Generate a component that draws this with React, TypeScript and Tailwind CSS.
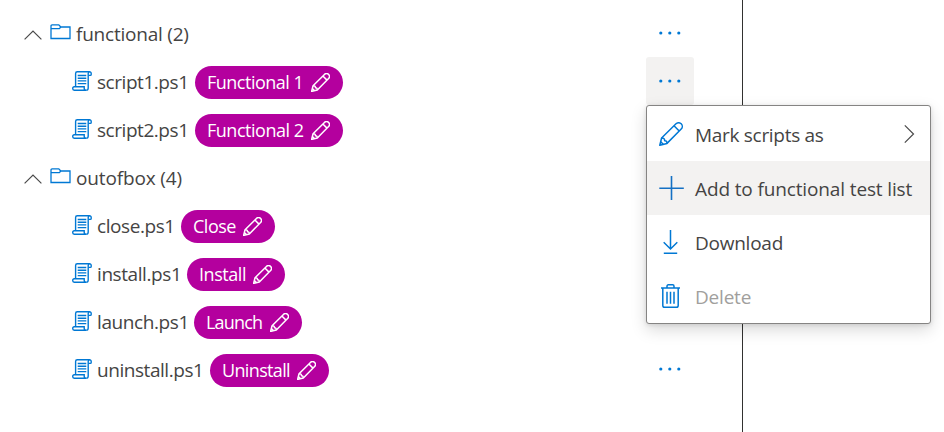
import React from "react";

type IconProps = { className?: string };

const ChevronUp = () => (
  <svg className="mt-0.5 h-5 w-[18px] shrink-0" viewBox="0 0 18 20" fill="none" stroke="#4a4a4a" strokeWidth="1.2">
    <path d="M0.6 14.4 9 6l8.4 8.4" />
  </svg>
);

const Folder = () => (
  <svg className="h-4 w-[21px] shrink-0" viewBox="0 0 21 16" fill="none" stroke="#0078d4" strokeWidth="1.3">
    <path d="M1 14.500V2.100c0-.8.4-1.200 1.100-1.200h6.700l2 2.100h9.200v11.500z" />
    <path d="M1 4.700h8.400l1.400-1.700" />
  </svg>
);

const Script = () => (
  <svg className="h-5 w-5 shrink-0" viewBox="0 0 20 20" fill="none" stroke="#0078d4" strokeWidth="1.4">
    <path d="M16.300 4.400h2c.6 0 .9-.3.9-.9v-1C19.200 1.400 18.500.8 17.400.8H5.300C4.200.8 3.600 1.500 3.600 2.500v13" />
    <path d="M17.600.8c-.9 0-1.400.6-1.400 1.700v14.400c0 1.400-.8 2.300-1.900 2.300" />
    <path d="M14.300 19.200H2.300c-1 0-1.600-.7-1.600-1.700s.6-1.800 1.600-1.800h9.900v1.600c0 1.100.7 1.900 2.100 1.900z" />
    <path d="M5.700 4.500h8.600M5.700 7.200h8.600M5.700 9.900h8.600M5.700 12.600h8.600" />
  </svg>
);

const Pencil = ({ className }: IconProps) => (
  <svg className={className} viewBox="0 0 24 24" fill="none" stroke="currentColor" strokeLinejoin="round">
    <path d="M0.800 23.200 2.600 16 17 1.800a3.650 3.650 0 0 1 5.200 5.200L8 21.400z" />
    <path d="M15 3.800 20.200 9M2.600 16c2.400.1 3.200.9 3 2.700 1.600-.2 2.400.8 2.400 2.700M1.700 19.700l2.600 2.600" />
  </svg>
);

const Plus = () => (
  <svg className="h-6 w-[25px]" viewBox="0 0 25 24" fill="none" stroke="#1470c4" strokeWidth="1.6">
    <path d="M12.500 0v24M0.300 12.200h24.500" />
  </svg>
);

const Download = () => (
  <svg className="size-6" viewBox="0 0 24 24" fill="none" stroke="#0078d4" strokeWidth="1.500">
    <path d="M11.500 0v19M4.700 12.200l6.800 6.800 6.800-6.800M4.800 23.200h13.400" />
  </svg>
);

const Trash = () => (
  <svg className="size-6" viewBox="0 0 24 24" fill="none" stroke="#0078d4" strokeWidth="1.500">
    <path d="M2 4h19M8 4V2.200c0-.9.500-1.400 1.300-1.400h4.400c.8 0 1.300.5 1.300 1.400V4M3.800 4v17.400c0 1.100.7 1.800 1.800 1.800h11.800c1.100 0 1.800-.7 1.800-1.800V4M8 7.800v12M11.500 7.800v12M15 7.800v12" />
  </svg>
);

const ChevronRight = () => (
  <svg className="h-5 w-[11px]" viewBox="0 0 11 20" fill="none" stroke="#4a4a4a" strokeWidth="1.200">
    <path d="M0.800 1.300 9.500 10 0.800 18.700" />
  </svg>
);

const More = ({ active = false }: { active?: boolean }) => (
  <div className={`-mt-0.5 flex h-12 w-12 shrink-0 items-center justify-center rounded-[3px] ${active ? "bg-[#f3f2f1]" : ""}`}>
    <svg className="h-1 w-6" viewBox="0 0 24 4" fill="#0078d4">
      <circle cx="2.800" cy="2" r="1.600" />
      <circle cx="11.800" cy="2" r="1.600" />
      <circle cx="20.800" cy="2" r="1.600" />
    </svg>
  </div>
);

const FolderRow = ({ label, tracking, more }: { label: string; tracking: string; more?: boolean }) => (
  <div className="flex h-12 items-center pl-6">
    <ChevronUp />
    <span className="ml-2 -mt-1"><Folder /></span>
    <span className={`ml-[5px] ${tracking}`}>{label}</span>
    <span className="ml-auto">{more && <More />}</span>
  </div>
);

type ScriptRowProps = { name: string; nameStyle: string; tag: string; tagStyle: string; pill: string; more?: "idle" | "active" };

const ScriptRow = ({ name, nameStyle, tag, tagStyle, pill, more }: ScriptRowProps) => (
  <div className="flex h-12 items-center pl-18">
    <span className="-mt-[3px]"><Script /></span>
    <span className={`ml-[5px] shrink-0 ${nameStyle}`}>{name}</span>
    <span className={`mt-px flex h-[33px] shrink-0 items-center justify-between rounded-full bg-[#b4009e] pr-[13px] pl-3 text-[18px] text-white ${pill}`}>
      <span className={`-mt-0.5 ${tagStyle}`}>{tag}</span>
      <Pencil className="size-[19px] stroke-[1.9]" />
    </span>
    <span className="ml-auto">{more && <More active={more === "active"} />}</span>
  </div>
);

const MenuItem = ({ icon, label, className = "", tracking, trailing }: { icon: React.ReactNode; label: string; className?: string; tracking: string; trailing?: React.ReactNode }) => (
  <div className={`flex h-[54px] items-center pr-[15px] pl-3 ${className}`}>
    <span className="w-9">{icon}</span>
    <span className={`mt-px ${tracking}`}>{label}</span>
    <span className="ml-auto">{trailing}</span>
  </div>
);

export default function App() {
  return (
    <div className="relative flex h-[432px] w-[944px] overflow-hidden bg-white font-['Open_Sans','Noto_Sans',sans-serif] text-[19px] leading-6 whitespace-nowrap text-[#454443]">
      <div className="w-[743px] border-r border-[#323130] pt-[10px] pr-12">
        <FolderRow label="functional (2)" tracking="tracking-[-0.22px]" more />
        <ScriptRow name="script1.ps1" nameStyle="w-[98px] tracking-[-0.45px]" tag="Functional 1" tagStyle="tracking-[-0.5px]" pill="w-[148px]" more="active" />
        <ScriptRow name="script2.ps1" nameStyle="w-[98px] tracking-[-0.45px]" tag="Functional 2" tagStyle="tracking-[-0.48px]" pill="w-[148px]" />
        <FolderRow label="outofbox (4)" tracking="tracking-[-0.15px]" />
        <ScriptRow name="close.ps1" nameStyle="w-[84px] tracking-[-0.42px]" tag="Close" tagStyle="tracking-[-0.5px]" pill="w-[94px]" />
        <ScriptRow name="install.ps1" nameStyle="w-[90px] tracking-[-0.42px]" tag="Install" tagStyle="tracking-[-0.45px]" pill="w-[98px]" />
        <ScriptRow name="launch.ps1" nameStyle="w-[97px] tracking-[-0.4px]" tag="Launch" tagStyle="tracking-[-0.8px]" pill="w-[108px]" />
        <ScriptRow name="uninstall.ps1" nameStyle="w-[113px] tracking-[-0.45px]" tag="Uninstall" tagStyle="tracking-[-0.65px]" pill="w-[119px]" more="idle" />
      </div>
      <div className="absolute top-[105px] left-[646px] h-[219px] w-[285px] rounded-[3px] border border-[#858483] bg-white pt-px shadow-[0_6px_16px_rgba(0,0,0,0.15),0_1px_4px_rgba(0,0,0,0.11)]">
        <MenuItem icon={<Pencil className="size-6 stroke-[1.5] text-[#0078d4]" />} label="Mark scripts as" tracking="tracking-[-0.3px]" trailing={<ChevronRight />} />
        <MenuItem icon={<Plus />} label="Add to functional test list" tracking="tracking-[-0.13px]" className="bg-[#f3f2f1]" />
        <MenuItem icon={<Download />} label="Download" tracking="tracking-[-0.25px]" />
        <MenuItem icon={<Trash />} label="Delete" tracking="tracking-[-0.2px]" className="text-[#a19f9d]" />
      </div>
    </div>
  );
}
